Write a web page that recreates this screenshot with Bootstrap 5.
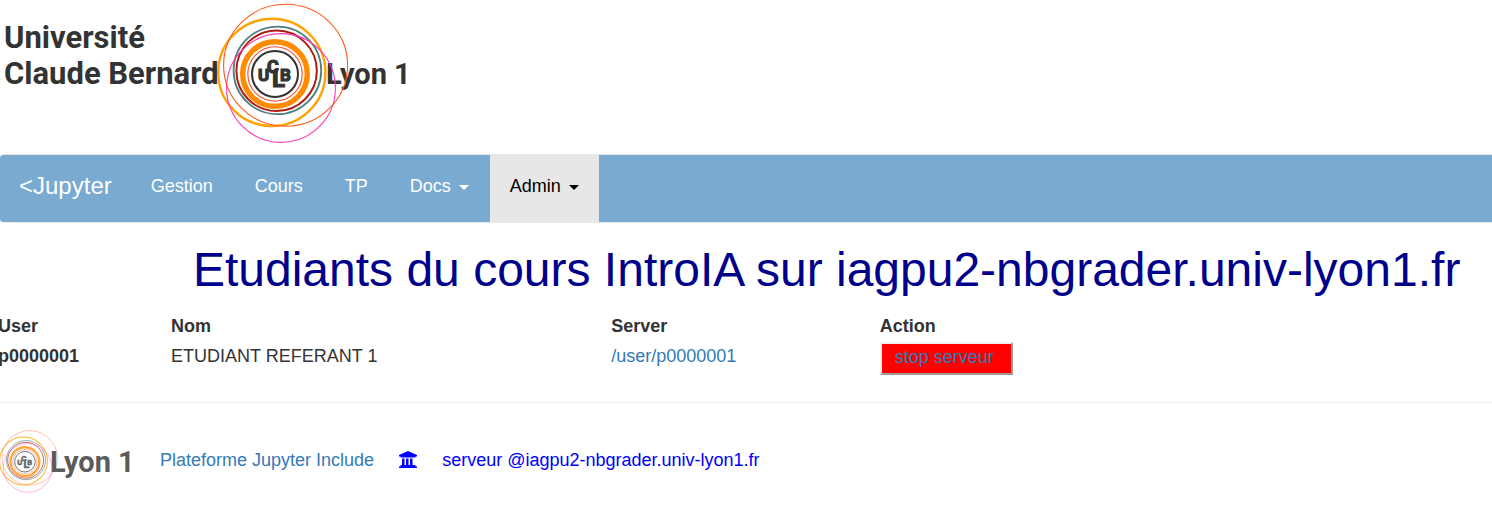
<!DOCTYPE html>
<html lang="fr">
<head>
<meta charset="utf-8">
<meta name="viewport" content="width=device-width, initial-scale=1">
<title>Jupyter - Etudiants du cours IntroIA</title>
<link href="https://cdn.jsdelivr.net/npm/bootstrap@5.3.0/dist/css/bootstrap.min.css" rel="stylesheet">
<style>
body { font-family: "Liberation Sans", Arial, sans-serif; font-size: 18px; line-height: 26px; color: #333; overflow-x: hidden; }
a { color: #337ab7; text-decoration: none; }
svg { display: block; }
.logo-text { font-family: Roboto, sans-serif; font-weight: 700; fill: #333; }
.main-menu { background: #78aad2; border: 1px solid #e7e7e7; border-width: 1px 0 1px 0; border-radius: 4px 0 0 4px; }
.main-menu .navbar-brand { color: #fff; font-size: 24px; line-height: 26px; padding: 18px 18px 18px 19px; margin: 0; }
.main-menu .navbar-nav .nav-link { color: #fff; line-height: 26px; padding: 18px 21px 23px; }
.main-menu .navbar-nav .admin-link { background: #e7e7e7; color: #000; padding: 18px 20px 23px; }
.main-menu .dropdown-toggle::after { border-top-width: 5px; border-left-width: 5px; border-right-width: 5px; margin-left: 8px; vertical-align: 2px; }
.page-title { color: #00008b; font-size: 48px; line-height: 52px; padding-left: 13%; margin: 21px 0 16px -1px; white-space: nowrap; }
.students { margin-left: -2px; table-layout: fixed; }
.students th, .students td { padding: 0; height: 30px; line-height: 29px; vertical-align: top; }
.students .c-user { width: 11.6%; }
.students .c-name { width: 29.5%; }
.students .c-server { width: 18%; }
.stop-btn { display: block; background: #f00; color: #337ab7; border: 2px outset #efefef; padding: 0 17px 3px 13px; line-height: 26px; }
.rule { border-top: 1px solid #eee; opacity: 1; margin: 27px 0; }
.site-footer a { padding-bottom: 4px; }
.site-footer a.server { color: #00f; }
</style>
</head>
<body>
<header>
<svg width="412" height="154" viewBox="0 0 412 154" role="img" aria-label="Université Claude Bernard Lyon 1">
  <defs>
    <symbol id="rings" viewBox="217 3 132 141">
      <g fill="none">
        <circle cx="271.8" cy="72.4" r="53.6" stroke="#ffa200" stroke-width="2.4"/>
        <circle cx="277.4" cy="70.4" r="43.8" stroke="#4f7f82" stroke-width="1.8"/>
        <circle cx="276.6" cy="70.8" r="40.2" stroke="#b01c10" stroke-width="2"/>
        <circle cx="275" cy="74" r="32.3" stroke="#ff8c00" stroke-width="5.4"/>
        <circle cx="275" cy="74" r="27.2" stroke="#ff4b28" stroke-width="1.1"/>
        <circle cx="275" cy="74" r="23" stroke="#333" stroke-width="2"/>
        <circle cx="281" cy="88" r="54.4" stroke="#ff3cb4" stroke-width="1.1"/>
        <ellipse cx="285.6" cy="65.3" rx="62" ry="61" stroke="#ff5a1e" stroke-width="1.1"/>
      </g>
      <g class="logo-text" font-size="17" stroke="#333" stroke-width="1.2">
        <text x="258" y="81">U</text>
        <text x="267" y="73" font-size="18">C</text>
        <text x="272" y="87" font-size="24">L</text>
        <text x="280" y="81">B</text>
      </g>
    </symbol>
  </defs>
  <g class="logo-text" font-size="31">
    <text x="4" y="48">Université</text>
    <text x="4" y="84">Claude Bernard</text>
    <text x="326" y="84" font-size="29">Lyon 1</text>
  </g>
  <use href="#rings" x="217" y="3" width="132" height="141"/>
</svg>
<nav class="main-menu navbar navbar-expand p-0 align-items-start">
  <a class="navbar-brand" href="#">&lt;Jupyter</a>
  <ul class="navbar-nav">
    <li class="nav-item"><a class="nav-link" href="#">Gestion</a></li>
    <li class="nav-item"><a class="nav-link" href="#">Cours</a></li>
    <li class="nav-item"><a class="nav-link" href="#">TP</a></li>
    <li class="nav-item dropdown"><a class="nav-link dropdown-toggle" href="#" role="button">Docs</a></li>
    <li class="nav-item dropdown"><a class="nav-link dropdown-toggle admin-link" href="#" role="button">Admin</a></li>
  </ul>
</nav>
</header>
<main>
<h1 class="page-title fw-normal">Etudiants du cours IntroIA sur iagpu2-nbgrader.univ-lyon1.fr</h1>
<table class="students w-100">
  <thead>
    <tr><th class="c-user">User</th><th class="c-name">Nom</th><th class="c-server">Server</th><th>Action</th></tr>
  </thead>
  <tbody>
    <tr><th scope="row">p0000001</th><td>ETUDIANT REFERANT 1</td><td><a href="#">/user/p0000001</a></td><td><button class="stop-btn" type="button">stop serveur</button></td></tr>
  </tbody>
</table>
</main>
<hr class="rule">
<footer class="site-footer d-flex align-items-center">
  <svg width="136" height="63" viewBox="0 0 136 63" role="img" aria-label="Lyon 1">
    <use href="#rings" x="-1" y="0" width="59" height="63" opacity=".75"/>
    <text class="logo-text" x="50" y="42" font-size="29" opacity=".8">Lyon 1</text>
  </svg>
  <a class="ms-4" href="#">Plateforme Jupyter Include</a>
  <a class="server d-flex align-items-center ms-4" href="#">
    <svg width="20" height="18" viewBox="0 0 20 18" fill="#00f" aria-hidden="true"><path d="M10 0 19 4v1.500h-1.500v1h-15v-1H1V4zM4 7.500h2.500V14h1.500V7.500h2.500V14h1.500V7.500h2.500V14H16v1H3v-1h1zM2.500 14h15v1.500H19V17H1v-1.500h1.500z"/></svg>
    <span class="ms-4">serveur @iagpu2-nbgrader.univ-lyon1.fr</span>
  </a>
</footer>
<script src="https://cdn.jsdelivr.net/npm/bootstrap@5.3.0/dist/js/bootstrap.bundle.min.js"></script>
</body>
</html>
